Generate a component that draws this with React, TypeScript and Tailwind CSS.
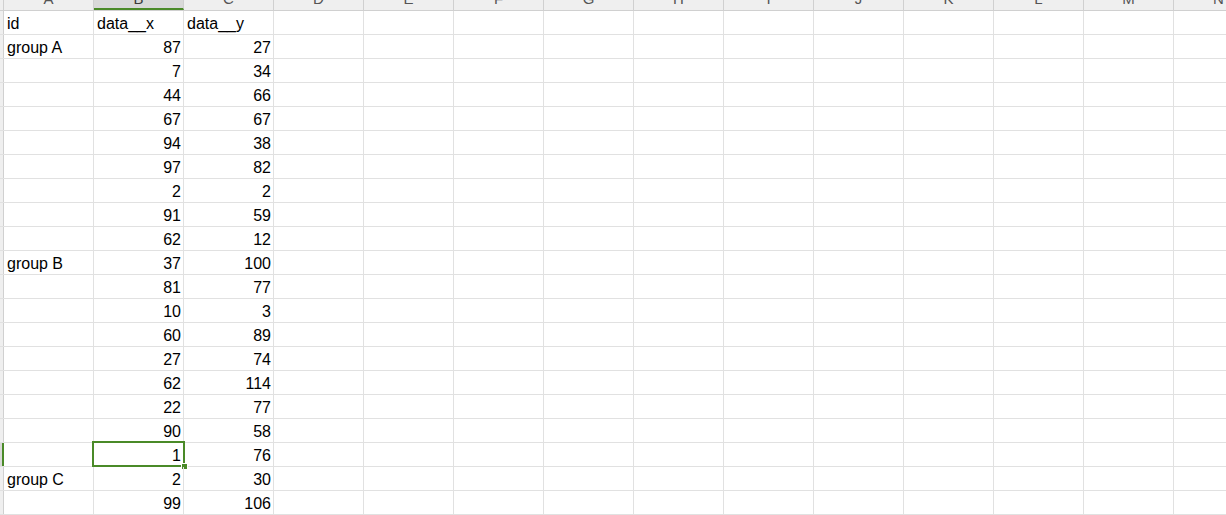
import React from "react";

const COLS = ["A","B","C","D","E","F","G","H","I","J","K","L","M","N"];

const ROWS: [string, string, string][] = [
  ["id", "data__x", "data__y"],
  ["group A", "87", "27"],
  ["", "7", "34"],
  ["", "44", "66"],
  ["", "67", "67"],
  ["", "94", "38"],
  ["", "97", "82"],
  ["", "2", "2"],
  ["", "91", "59"],
  ["", "62", "12"],
  ["group B", "37", "100"],
  ["", "81", "77"],
  ["", "10", "3"],
  ["", "60", "89"],
  ["", "27", "74"],
  ["", "62", "114"],
  ["", "22", "77"],
  ["", "90", "58"],
  ["", "1", "76"],
  ["group C", "2", "30"],
  ["", "99", "106"],
];

export default function App() {
  return (
    <div
      className="w-[1226px] h-[515px] overflow-hidden bg-white"
      style={{ fontFamily: '"Liberation Sans", Arial, sans-serif' }}
    >
      <div className="-mt-[10px] w-[1300px]">
        {/* column header */}
        <div className="flex h-[21px] bg-[#efefef] border-b border-[#d0d0d0]">
          <div className="w-[4px] shrink-0 border-r border-[#d0d0d0]" />
          {COLS.map((c) => (
            <div
              key={c}
              className={
                c === "B"
                  ? "w-[90px] shrink-0 border-r border-[#d0d0d0] bg-[#d9d9d9] text-center text-[15px] leading-[17px] text-[#3a3a3a] border-b-2 border-b-[#4a8a28]"
                  : "w-[90px] shrink-0 border-r border-[#d0d0d0] text-center text-[15px] leading-[17px] text-[#555]"
              }
            >
              {c}
            </div>
          ))}
        </div>
        {ROWS.map((r, i) => {
          const selected = i === 18;
          return (
            <div key={i} className="flex h-[24px] border-b border-[#e1e1e1]">
              <div
                className={
                  selected
                    ? "w-[4px] shrink-0 bg-[#d9d9d9] border-r-2 border-[#4a8a28]"
                    : "w-[4px] shrink-0 bg-[#efefef] border-r border-[#d0d0d0]"
                }
              />
              <div className="w-[90px] shrink-0 border-r border-[#e1e1e1] flex items-end pl-[3px] text-[16px] leading-[20px] text-black">
                {r[0]}
              </div>
              <div
                className={
                  "w-[90px] shrink-0 border-r border-[#e1e1e1] flex items-end text-[16px] leading-[20px] text-black relative " +
                  (i === 0 ? "justify-start pl-[3px]" : "justify-end pr-[2px]")
                }
              >
                {r[1]}
                {selected && (
                  <div className="absolute -left-[2px] -top-[2px] w-[93px] h-[26px] border-2 border-[#4a8a28]">
                    <div className="absolute -right-[5px] -bottom-[5px] w-[7px] h-[7px] bg-[#4a8a28] border border-white" />
                  </div>
                )}
              </div>
              <div
                className={
                  "w-[90px] shrink-0 border-r border-[#e1e1e1] flex items-end text-[16px] leading-[20px] text-black " +
                  (i === 0 ? "justify-start pl-[3px]" : "justify-end pr-[2px]")
                }
              >
                {r[2]}
              </div>
              {COLS.slice(3).map((c) => (
                <div key={c} className="w-[90px] shrink-0 border-r border-[#e1e1e1]" />
              ))}
            </div>
          );
        })}
      </div>
    </div>
  );
}
